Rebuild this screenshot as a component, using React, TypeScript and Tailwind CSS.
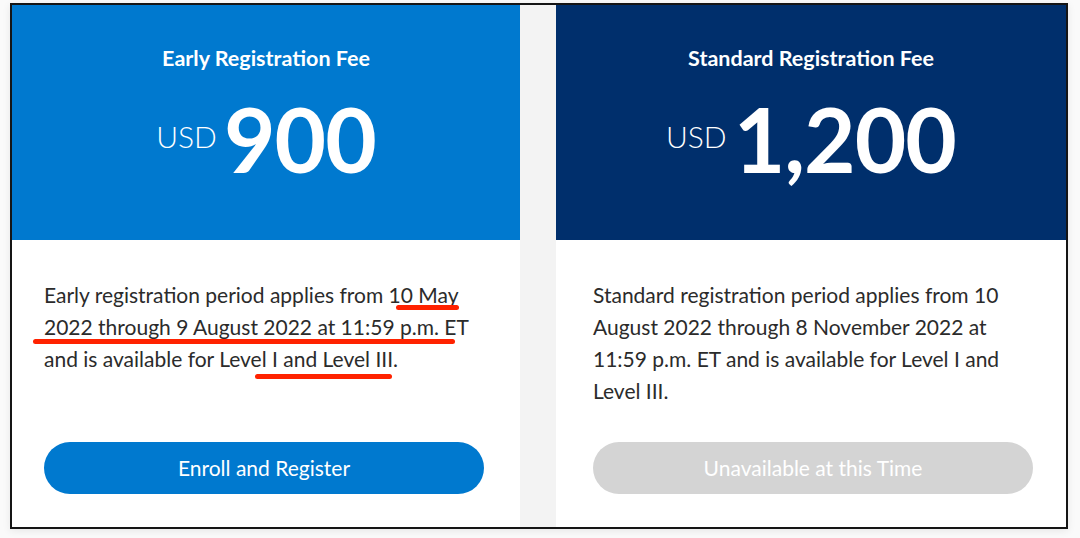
const font = { fontFamily: "Lato, 'Open Sans', sans-serif" };

type Mark = { left: number; top: number; width: number };

const FeeCard = ({
  title,
  amount,
  headerBg,
  text,
  button,
  buttonClass,
  padClass,
  marks = [],
}: {
  title: string;
  amount: string;
  headerBg: string;
  text: string;
  button: string;
  buttonClass: string;
  padClass: string;
  marks?: Mark[];
}) => (
  <div className="flex flex-col bg-white h-full">
    <div className={`h-[235px] flex flex-col items-center pt-[41px] text-white ${headerBg}`}>
      <h2 className="text-[21.5px] leading-[24px] font-bold">{title}</h2>
      <div className="flex items-center mt-[24px] h-[88px]">
        <span className="text-[30px] font-light mr-[7px] mt-[-4px]">USD</span>
        <span className="text-[89px] leading-none font-bold tracking-[-1px]">{amount}</span>
      </div>
    </div>
    <div className={`flex flex-col pt-[39px] ${padClass}`}>
      <div className="relative h-[128px] w-[440px]">
        <p className="text-[21px] leading-[32px] text-[#2b2b2b]">{text}</p>
        {marks.map((m, i) => (
          <div
            key={i}
            className="absolute h-[5px] rounded-full bg-[#ff2200]"
            style={{ left: m.left, top: m.top, width: m.width }}
          />
        ))}
      </div>
      <button
        className={`mt-[35px] h-[52px] w-[440px] rounded-full text-[21px] text-white ${buttonClass}`}
        style={font}
      >
        {button}
      </button>
    </div>
  </div>
);

export default function App() {
  return (
    <div className="min-h-screen bg-[#fafafa] pt-[3px] pl-[10px]" style={font}>
      <div className="w-[1058px] h-[526px] border-2 border-[#151515] bg-[#f3f3f3] flex shadow-[0_2px_8px_rgba(0,0,0,0.08)]">
        <div className="w-[508px]">
          <FeeCard
            title="Early Registration Fee"
            amount="900"
            headerBg="bg-[#0079cf]"
            text="Early registration period applies from 10 May 2022 through 9 August 2022 at 11:59 p.m. ET and is available for Level I and Level III."
            button="Enroll and Register"
            buttonClass="bg-[#0079cf]"
            padClass="pl-[32px]"
            marks={[
              { left: 352, top: 26, width: 63 },
              { left: -11, top: 60, width: 422 },
              { left: 211, top: 95, width: 137 },
            ]}
          />
        </div>
        <div className="w-[36px]" />
        <div className="w-[510px]">
          <FeeCard
            title="Standard Registration Fee"
            amount="1,200"
            headerBg="bg-[#002f6c]"
            text="Standard registration period applies from 10 August 2022 through 8 November 2022 at 11:59 p.m. ET and is available for Level I and Level III."
            button="Unavailable at this Time"
            buttonClass="bg-[#d4d4d4] text-[#f7f7f7]"
            padClass="pl-[37px] pr-[33px]"
          />
        </div>
      </div>
    </div>
  );
}
